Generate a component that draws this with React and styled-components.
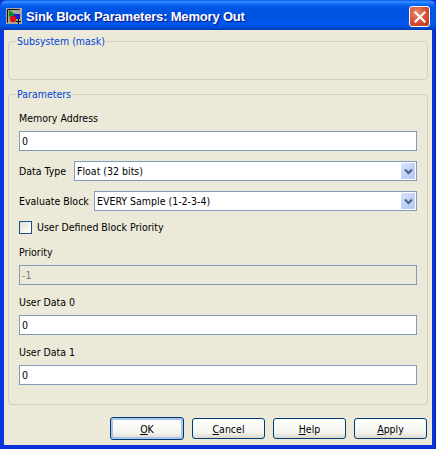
import React from "react";
import styled, { createGlobalStyle } from "styled-components";

const GlobalStyle = createGlobalStyle`
  html, body {
    margin: 0;
    padding: 0;
    background: #0831d9;
  }
`;

const FONT = `"DejaVu Sans Condensed", "DejaVu Sans", sans-serif`;

const App = () => (
  <Window>
    <GlobalStyle />
    <TitleBar>
      <AppIcon />
      <Title>Sink Block Parameters: Memory Out</Title>
      <CloseButton aria-label="Close">
        <svg width="12" height="12" viewBox="0 0 12 12">
          <path d="M1.5 1.5 L10.5 10.5 M10.5 1.5 L1.5 10.5" stroke="#fff" strokeWidth="2.2" strokeLinecap="square" />
        </svg>
      </CloseButton>
    </TitleBar>
    <Content>
      <Group $height={45}>
        <Legend>Subsystem (mask)</Legend>
      </Group>
      <Group $height={317} $top={8}>
        <Legend>Parameters</Legend>
        <Stack>
          <Field>
            <Label>Memory Address</Label>
            <TextInput defaultValue="0" />
          </Field>
          <SelectRow>
            <SelectLabel $width={55}>Data Type</SelectLabel>
            <Select>
              <SelectValue>Float (32 bits)</SelectValue>
              <DropArrow />
            </Select>
          </SelectRow>
          <SelectRow>
            <SelectLabel $width={75}>Evaluate Block</SelectLabel>
            <Select>
              <SelectValue>EVERY Sample (1-2-3-4)</SelectValue>
              <DropArrow />
            </Select>
          </SelectRow>
          <CheckRow>
            <CheckBox type="checkbox" />
            <Label>User Defined Block Priority</Label>
          </CheckRow>
          <Field $top={2}>
            <Label>Priority</Label>
            <TextInput defaultValue="-1" disabled />
          </Field>
          <Field $top={1}>
            <Label>User Data 0</Label>
            <TextInput defaultValue="0" />
          </Field>
          <Field $top={1}>
            <Label>User Data 1</Label>
            <TextInput defaultValue="0" />
          </Field>
        </Stack>
      </Group>
      <ButtonBar>
        <Button $focused>
          <u>O</u>K
        </Button>
        <Button>
          <u>C</u>ancel
        </Button>
        <Button>
          <u>H</u>elp
        </Button>
        <Button>
          <u>A</u>pply
        </Button>
      </ButtonBar>
    </Content>
  </Window>
);

export default App;

const AppIcon = () => (
  <IconSvg width="16" height="16" viewBox="0 0 16 16">
    <rect x="0" y="0" width="16" height="16" fill="#a8a89c" />
    <path d="M1.5 1.5 H13.5 M1.5 1.5 V14.5" stroke="#111" strokeWidth="1" fill="none" />
    <polygon points="3,2 10,7 3,9" fill="#0a8a2a" />
    <rect x="8" y="6" width="6" height="5" fill="#1a1ad0" />
    <circle cx="7" cy="11" r="3.2" fill="#e01010" />
    <path d="M12.5 11 V16 M10 13.5 H15" stroke="#000" strokeWidth="1" />
  </IconSvg>
);

const DropArrow = () => (
  <ArrowButton>
    <svg width="9" height="7" viewBox="0 0 9 7">
      <path d="M1 1.5 L4.5 5 L8 1.5" stroke="#4d6185" strokeWidth="2" fill="none" />
    </svg>
  </ArrowButton>
);

const Window = styled.div`
  width: 436px;
  height: 449px;
  box-sizing: border-box;
  display: flex;
  flex-direction: column;
  overflow: hidden;
  border-radius: 7px 7px 0 0;
  background: linear-gradient(90deg, #0831d9 0, #0a3ce0 2px, #0831d9 4px, #0831d9 432px, #0a3ce0 434px, #001ea0 436px);
  font-family: ${FONT};
  font-size: 10.5px;
  color: #000;
`;

const TitleBar = styled.div`
  height: 30px;
  flex: none;
  box-sizing: border-box;
  display: flex;
  align-items: center;
  padding: 2px 6px 0 6px;
  background: linear-gradient(
    180deg,
    #0058ee 0,
    #3a93ff 2px,
    #0f6af5 4px,
    #0055e5 8px,
    #0053e1 18px,
    #0058ee 24px,
    #0049d0 28px,
    #0037b0 30px
  );
`;

const IconSvg = styled.svg`
  flex: none;
  margin-right: 4px;
`;

const Title = styled.div`
  flex: 1;
  font-family: "Liberation Sans", Arial, sans-serif;
  font-weight: 700;
  font-size: 13px;
  letter-spacing: -0.18px;
  color: #fff;
  text-shadow: 1px 1px 1px #0f1089;
  white-space: nowrap;
`;

const CloseButton = styled.div`
  width: 21px;
  height: 21px;
  margin-top: 1px;
  box-sizing: border-box;
  display: flex;
  align-items: center;
  justify-content: center;
  border: 1px solid #fff;
  border-radius: 3px;
  background: radial-gradient(circle at 35% 30%, #e98a6c 0, #d8553a 45%, #b9351c 100%);
`;

const Content = styled.div`
  flex: 1;
  margin: 0 4px 4px;
  padding: 5px 4px 0;
  background: #ece9d8;
  display: flex;
  flex-direction: column;
`;

const Group = styled.fieldset`
  margin: ${(p) => p.$top || 0}px 0 0;
  padding: 0 10px;
  height: ${(p) => p.$height}px;
  box-sizing: border-box;
  border: 1px solid #d0d0bf;
  border-radius: 4px;
  min-width: 0;
`;

const Legend = styled.legend`
  margin-left: -3px;
  padding: 0 1px;
  color: #0046d5;
  line-height: 13px;
`;

const Stack = styled.div`
  display: flex;
  flex-direction: column;
  gap: 10px;
  padding-top: 11px;
`;

const Field = styled.div`
  display: flex;
  flex-direction: column;
  gap: 6px;
  margin-top: ${(p) => p.$top || 0}px;
`;

const Label = styled.span`
  line-height: 13px;
  white-space: nowrap;
`;

const TextInput = styled.input`
  height: 20px;
  box-sizing: border-box;
  width: 100%;
  padding: 0 2px;
  margin: 0;
  border: 1px solid #7f9db9;
  border-radius: 0;
  outline: none;
  background: #fff;
  font: inherit;
  color: #000;

  &:disabled {
    background: #ece9d8;
    color: #7a7a70;
    opacity: 1;
    -webkit-text-fill-color: #7a7a70;
  }
`;

const SelectRow = styled.div`
  display: flex;
  align-items: center;
`;

const SelectLabel = styled(Label)`
  flex: none;
  width: ${(p) => p.$width}px;
`;

const Select = styled.div`
  flex: 1;
  height: 20px;
  box-sizing: border-box;
  display: flex;
  align-items: center;
  justify-content: space-between;
  padding: 1px;
  border: 1px solid #7f9db9;
  background: #fff;
`;

const SelectValue = styled.span`
  padding-left: 1px;
  white-space: nowrap;
`;

const ArrowButton = styled.span`
  width: 14px;
  height: 16px;
  display: flex;
  align-items: center;
  justify-content: center;
  border-radius: 1px;
  background: linear-gradient(135deg, #dbe5fc 0, #c1d2f8 50%, #b1c7f5 100%);
`;

const CheckRow = styled.label`
  display: flex;
  align-items: center;
  gap: 5px;
  height: 13px;
`;

const CheckBox = styled.input`
  appearance: none;
  width: 13px;
  height: 13px;
  margin: 0;
  flex: none;
  box-sizing: border-box;
  border: 1px solid #1c5180;
  background: linear-gradient(135deg, #dcdcd7 0, #f5f5f2 60%, #ffffff 100%);
`;

const ButtonBar = styled.div`
  display: flex;
  justify-content: flex-end;
  align-items: center;
  gap: 8px;
  margin-top: 12px;
  padding-right: 1px;
`;

const Button = styled.button`
  width: ${(p) => (p.$focused ? 74 : 73)}px;
  height: ${(p) => (p.$focused ? 23 : 21)}px;
  box-sizing: border-box;
  padding: 0;
  font: inherit;
  color: #000;
  border: 1px solid #003c74;
  border-radius: 3px;
  background: linear-gradient(180deg, #ffffff 0, #f4f4ee 70%, #dcd8ce 100%);
  box-shadow: ${(p) => (p.$focused ? "inset 0 0 0 2px #a9c4ea" : "none")};
`;
